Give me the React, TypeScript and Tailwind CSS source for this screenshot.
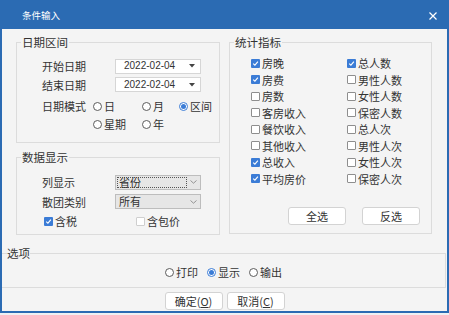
import React from 'react';

type CheckProps = { checked?: boolean; label: string; light?: boolean };

function Check({ checked = false, label, light = false }: CheckProps) {
  return (
    <div className="flex items-center h-[16.5px]">
      <span
        className={`w-[9px] h-[9px] rounded-[1px] flex items-center justify-center shrink-0 ${
          checked ? 'bg-[#3b7cd6]' : light ? 'bg-white border border-[#cfcfcf]' : 'bg-white border border-[#8e8e8e]'
        }`}
      >
        {checked && (
          <svg width="7" height="7" viewBox="0 0 7 7">
            <path d="M1.2 3.6 L2.9 5.2 L5.9 1.7" stroke="white" strokeWidth="1.1" fill="none" />
          </svg>
        )}
      </span>
      <span className="ml-[2px]">{label}</span>
    </div>
  );
}

type RadioProps = { checked?: boolean; label: string; className?: string };

function Radio({ checked = false, label, className = '' }: RadioProps) {
  return (
    <span className={`flex items-center ${className}`}>
      <span
        className={`w-[9px] h-[9px] rounded-full border bg-white flex items-center justify-center shrink-0 ${
          checked ? 'border-[#3b7cd6]' : 'border-[#5c5c5c]'
        }`}
      >
        {checked && <span className="w-[5px] h-[5px] rounded-full bg-[#3b7cd6]" />}
      </span>
      <span className="ml-[2px]">{label}</span>
    </span>
  );
}

function DateField({ value }: { value: string }) {
  return (
    <div className="w-[86px] h-[15px] bg-white border border-[#d6d6d6] flex items-center pl-[8px] pr-[5px]">
      <span className="flex-1 font-['Liberation_Sans',sans-serif] text-[10px] text-[#333] leading-none">{value}</span>
      <svg width="6" height="4" viewBox="0 0 6 4">
        <path d="M0 0 H6 L3 3.5 Z" fill="#444" />
      </svg>
    </div>
  );
}

function Select({ value, focused = false }: { value: string; focused?: boolean }) {
  return (
    <div className="w-[86px] h-[15px] bg-[#e6e6e6] border border-[#bdbdbd] flex items-stretch">
      <span
        className={`flex-1 flex items-center leading-none ${
          focused ? 'border border-dotted border-[#555] m-[1px] mr-0 pl-[1px]' : 'pl-[3px]'
        }`}
      >
        {value}
      </span>
      <span className="w-[13px] flex items-center justify-center">
        <svg width="7" height="4" viewBox="0 0 7 4">
          <path d="M0.5 0.5 L3.5 3.2 L6.5 0.5" stroke="#8a8a8a" strokeWidth="0.9" fill="none" />
        </svg>
      </span>
    </div>
  );
}

function Btn({ children }: { children: React.ReactNode }) {
  return (
    <button className="h-[18px] w-[58px] bg-white border border-[#d3d3d3] rounded-[3px] text-[11px] leading-none text-[#333] flex items-center justify-center">
      {children}
    </button>
  );
}

const stats: [string, boolean, string, boolean][] = [
  ['房晚', true, '总人数', true],
  ['房费', true, '男性人数', false],
  ['房数', false, '女性人数', false],
  ['客房收入', false, '保密人数', false],
  ['餐饮收入', false, '总人次', false],
  ['其他收入', false, '男性人次', false],
  ['总收入', true, '女性人次', false],
  ['平均房价', true, '保密人次', false],
];

export default function App() {
  return (
    <div className="w-[449px] h-[315px] bg-[#eef1f4] flex flex-col text-[11px] text-[#333] font-['Noto_Sans_CJK_SC',sans-serif] overflow-hidden">
      {/* title bar */}
      <div className="h-[29px] bg-[#2b6bb3] flex items-center pt-[3px] pl-[22px] pr-[12px] text-white">
        <span className="text-[9.5px] leading-none flex-1">条件输入</span>
        <svg width="8" height="8" viewBox="0 0 8 8">
          <path d="M0.5 0.5 L7.5 7.5 M7.5 0.5 L0.5 7.5" stroke="white" strokeWidth="1.2" />
        </svg>
      </div>

      <div className="h-[284px] bg-[#f4f4f4] border-x-2 border-b-2 border-[#2b6bb3] flex flex-col">
        <div className="flex pl-[14px] gap-[9px] mt-[6px]">
          {/* left column */}
          <div className="w-[204px] flex flex-col">
            <fieldset className="h-[108px] border border-[#dcdcdc]">
              <legend className="ml-[4px] px-[1px] leading-[14px] text-[11.5px]">日期区间</legend>
              <div className="pl-[25px]">
                <div className="mt-[9px] flex items-center">
                  <span className="w-[73px]">开始日期</span>
                  <DateField value="2022-02-04" />
                </div>
                <div className="mt-[2px] flex items-center">
                  <span className="w-[73px]">结束日期</span>
                  <DateField value="2022-02-04" />
                </div>
                <div className="mt-[6px] h-[14px] flex items-center">
                  <span className="w-[51px]">日期模式</span>
                  <Radio label="日" className="w-[49px]" />
                  <Radio label="月" className="w-[37px]" />
                  <Radio label="区间" checked />
                </div>
                <div className="mt-[4px] h-[14px] flex items-center pl-[51px]">
                  <Radio label="星期" className="w-[49px]" />
                  <Radio label="年" />
                </div>
              </div>
            </fieldset>

            <fieldset className="mt-[7px] h-[85px] border border-[#dcdcdc]">
              <legend className="ml-[4px] px-[1px] leading-[14px] text-[11.5px]">数据显示</legend>
              <div className="pl-[25px]">
                <div className="mt-[10px] flex items-center">
                  <span className="w-[73px]">列显示</span>
                  <Select value="省份" focused />
                </div>
                <div className="mt-[3px] flex items-center">
                  <span className="w-[73px]">散团类别</span>
                  <Select value="所有" />
                </div>
                <div className="mt-[3px] flex items-center pl-[2px]">
                  <div className="w-[92px]">
                    <Check label="含税" checked />
                  </div>
                  <Check label="含包价" light />
                </div>
              </div>
            </fieldset>
          </div>

          {/* right column */}
          <fieldset className="w-[203px] h-[199px] border border-[#dcdcdc]">
            <legend className="ml-[4px] px-[1px] leading-[14px] text-[11.5px]">统计指标</legend>
            <div className="pl-[21px]">
              <div className="mt-[6px] grid grid-cols-[96px_1fr]">
                {stats.map(([a, ac, b, bc]) => (
                  <React.Fragment key={a}>
                    <Check label={a} checked={ac} />
                    <Check label={b} checked={bc} />
                  </React.Fragment>
                ))}
              </div>
              <div className="mt-[20px] flex gap-[16px] pl-[37px]">
                <Btn>全选</Btn>
                <Btn>反选</Btn>
              </div>
            </div>
          </fieldset>
        </div>

        <fieldset className="mt-[11px] mr-[1px] h-[42px] border-t border-r border-b border-[#dcdcdc]">
          <legend className="ml-[5px] leading-[14px] text-[11.5px]">选项</legend>
          <div className="mt-[5px] h-[14px] flex items-center justify-center gap-[9px]">
            <Radio label="打印" />
            <Radio label="显示" checked />
            <Radio label="输出" />
          </div>
        </fieldset>

        <div className="mt-[4px] flex justify-center gap-[4px]">
          <Btn>
            确定(<span className="underline">O</span>)
          </Btn>
          <Btn>
            取消(<span className="underline">C</span>)
          </Btn>
        </div>
      </div>
    </div>
  );
}
